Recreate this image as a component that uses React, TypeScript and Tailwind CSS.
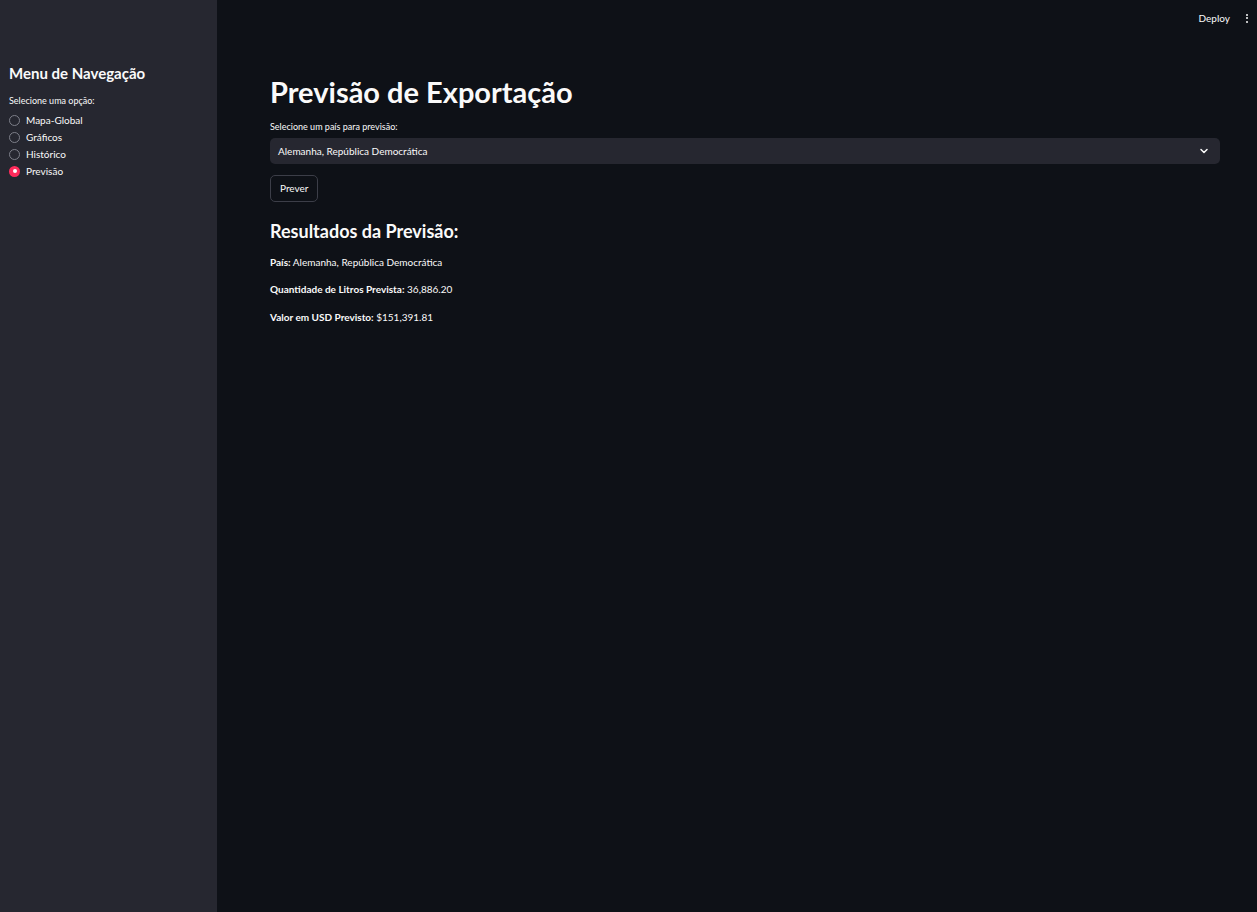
import { ChevronDown } from "lucide-react";

const options = ["Mapa-Global", "Gráficos", "Histórico", "Previsão"];

export default function App() {
  const selected = "Previsão";

  return (
    <div className="flex min-h-[912px] w-full bg-[#0e1117] text-[#fafafa] font-['Lato',sans-serif]">
      {/* Sidebar */}
      <aside className="w-[217px] shrink-0 bg-[#262730] px-[9px] pt-[64px]">
        <h2 className="text-[15px] font-bold leading-[18px]">Menu de Navegação</h2>
        <p className="mt-[13px] text-[9px] leading-[12px]">Selecione uma opção:</p>
        <div className="mt-[7px] flex flex-col gap-[5px]">
          {options.map((opt) => (
            <label key={opt} className="flex h-[12px] items-center gap-[6px] text-[10px]">
              {opt === selected ? (
                <span className="flex h-[11px] w-[11px] items-center justify-center rounded-full bg-[#ff2b5b]">
                  <span className="h-[4px] w-[4px] rounded-full bg-white" />
                </span>
              ) : (
                <span className="h-[11px] w-[11px] rounded-full border border-[#7d7f89]" />
              )}
              {opt}
            </label>
          ))}
        </div>
      </aside>

      {/* Main */}
      <main className="flex flex-1 flex-col">
        <div className="flex h-[36px] items-center justify-end gap-[16px] pr-[9px]">
          <span className="text-[10px]">Deploy</span>
          <span className="flex flex-col gap-[1.5px]">
            <span className="h-[2px] w-[2px] rounded-full bg-[#fafafa]" />
            <span className="h-[2px] w-[2px] rounded-full bg-[#fafafa]" />
            <span className="h-[2px] w-[2px] rounded-full bg-[#fafafa]" />
          </span>
        </div>

        <div className="ml-[53px] mr-[37px] flex flex-col pt-[38px]">
          <h1 className="text-[29px] font-bold leading-[36px]">Previsão de Exportação</h1>
          <p className="mt-[11px] text-[9px] leading-[12px]">Selecione um país para previsão:</p>
          <div className="mt-[5px] flex h-[26px] items-center justify-between rounded-[5px] bg-[#262730] pl-[8px] pr-[10px] text-[10px]">
            <span>Alemanha, República Democrática</span>
            <ChevronDown className="h-[12px] w-[12px]" strokeWidth={3} />
          </div>
          <div className="mt-[10px]">
            <button className="h-[27px] rounded-[5px] border border-[#3c3e48] px-[9px] text-[10px]">
              Prever
            </button>
          </div>
          <h3 className="mt-[17px] text-[18px] font-bold leading-[24px]">Resultados da Previsão:</h3>
          <p className="mt-[12px] text-[10px] leading-[14px]">
            <b>País:</b> Alemanha, República Democrática
          </p>
          <p className="mt-[13px] text-[10px] leading-[14px]">
            <b>Quantidade de Litros Prevista:</b> 36,886.20
          </p>
          <p className="mt-[14px] text-[10px] leading-[14px]">
            <b>Valor em USD Previsto:</b> $151,391.81
          </p>
        </div>
      </main>
    </div>
  );
}
